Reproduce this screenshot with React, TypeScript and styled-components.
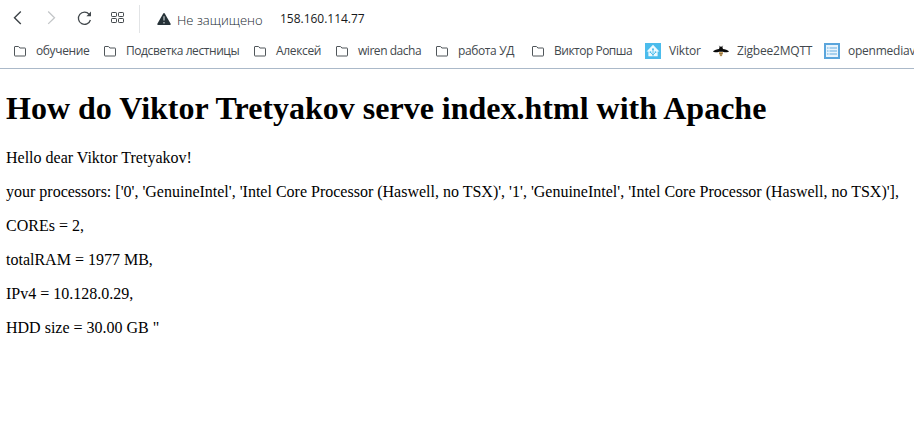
import React from "react";
import styled, { createGlobalStyle } from "styled-components";

const GlobalStyle = createGlobalStyle`
  html, body { margin: 0; padding: 0; background: #fff; overflow: hidden; }
  * { box-sizing: border-box; }
`;

const Window = styled.div`
  width: 914px;
  height: 424px;
  overflow: hidden;
  background: #fff;
`;

const Chrome = styled.header`
  height: 69px;
  border-bottom: 1px solid #abb9c9;
  font-family: "Open Sans", "Noto Sans", sans-serif;
  overflow: hidden;
`;

const Toolbar = styled.div`
  display: flex;
  align-items: center;
  height: 36px;
  padding-left: 10px;
`;

const NavButton = styled.span<{ $width: number }>`
  display: flex;
  flex: none;
  width: ${(p) => p.$width}px;
  height: 36px;
`;

const Divider = styled.span`
  flex: none;
  width: 1px;
  height: 28px;
  margin: 1px 16px 0 0;
  background: #e2e4e6;
`;

const Security = styled.span`
  display: flex;
  flex: none;
  width: 124px;
  height: 36px;
`;

const SecurityText = styled.span`
  margin: 11px 0 0 5px;
  font-size: 13px;
  line-height: 18px;
  letter-spacing: 0.02px;
  font-weight: 300;
  color: #20292f;
  white-space: nowrap;
`;

const Address = styled.span`
  margin-top: 1px;
  font-size: 12px;
  line-height: 18px;
  letter-spacing: -0.02px;
  color: #17191b;
  white-space: nowrap;
`;

const Bookmarks = styled.nav`
  display: flex;
  align-items: center;
  height: 30px;
  padding-left: 14px;
`;

const Bookmark = styled.span<{ $width: number; $gap: number }>`
  display: flex;
  flex: none;
  align-items: center;
  gap: ${(p) => p.$gap}px;
  width: ${(p) => p.$width}px;
`;

const BookmarkLabel = styled.span<{ $tracking: number }>`
  font-size: 12px;
  line-height: 18px;
  letter-spacing: ${(p) => p.$tracking}px;
  color: #42484d;
  white-space: nowrap;
`;

const Icon = styled.svg`
  display: block;
  flex: none;
`;

const Page = styled.main`
  display: flow-root;
  padding-left: 6px;
  font-family: "Liberation Serif", "Times New Roman", serif;
  font-size: 16px;
  color: #000;
`;

const Heading = styled.h1`
  margin: 21.44px 0;
  font-size: 32px;
  line-height: 37px;
  font-weight: 700;
  white-space: nowrap;
`;

const Paragraph = styled.p`
  margin: 16px 0;
  line-height: 18px;
  white-space: nowrap;
`;

const FolderIcon = () => (
  <Icon width="13" height="12" viewBox="0 0 13 12" fill="none" stroke="#50565a" strokeWidth="1">
    <path d="M.5 2q0-.5.5-.5h3.300q.5 0 .8.500l.7 1h5.200q.5 0 .5.5v7q0 .5-.5.5H1q-.5 0-.5-.5z" />
  </Icon>
);

const HomeIcon = () => (
  <Icon width="16" height="16" viewBox="0 0 16 16">
    <rect width="16" height="16" fill="#4bbcec" />
    <path d="M8 1.800 14.400 8.400h-1.800V13.300H3.400V8.400H1.600L8 1.800Z" fill="#eefaff" />
    <path d="M8 13.300V6.500M8 12 5.500 9.500M8 12 10.500 9.500" stroke="#4bbcec" strokeWidth=".9" fill="none" />
    <circle cx="8" cy="6.2" r="1" fill="#4bbcec" />
    <circle cx="5.5" cy="9.2" r=".9" fill="#4bbcec" />
    <circle cx="10.5" cy="9.2" r=".9" fill="#4bbcec" />
  </Icon>
);

const BeeIcon = () => (
  <Icon width="16" height="16" viewBox="0 0 16 16">
    <path d="M7.200 4.500 6.300 2.800M8.800 4.500 9.700 2.800" stroke="#333" strokeWidth=".7" />
    <path d="M8 3.600c1.200 0 1.800.9 1.900 2.300 2 .1 4.800.9 6.100 2.400-.8 1.200-3.600 1.300-6.100.4H6.100C3.600 9.600.8 9.500 0 8.300 1.300 6.800 4.100 6 6.100 5.900 6.200 4.500 6.800 3.600 8 3.600Z" fill="#090909" />
    <path d="M5.900 8.900h4.200C10 11 9 12.700 8 13.600 7 12.700 6 11 5.900 8.900Z" fill="#d9b06a" />
    <path d="M6.200 10.400h3.600M6.900 12.100h2.200" stroke="#3c3020" strokeWidth=".5" />
  </Icon>
);

const ListIcon = () => (
  <Icon width="16" height="16" viewBox="0 0 16 16">
    <rect width="16" height="16" fill="#5aa5dc" />
    <rect x="2" y="2" width="12" height="12" fill="#e9f4fc" />
    <path d="M3 5h1.500M3 8h1.500M3 11h1.500M5.500 5h7.500M5.500 8h7.500M5.500 11h7.500" stroke="#66acdf" strokeWidth="1.200" />
  </Icon>
);

const icons = { folder: FolderIcon, home: HomeIcon, bee: BeeIcon, list: ListIcon };

const bookmarks: { icon: keyof typeof icons; label: string; width: number; gap: number; tracking: number }[] = [
  { icon: "folder", label: "обучение", width: 90, gap: 9, tracking: -0.38 },
  { icon: "folder", label: "Подсветка лестницы", width: 150, gap: 9, tracking: -0.42 },
  { icon: "folder", label: "Алексей", width: 82, gap: 9, tracking: -0.35 },
  { icon: "folder", label: "wiren dacha", width: 100, gap: 9, tracking: -0.46 },
  { icon: "folder", label: "работа УД", width: 96, gap: 9, tracking: -0.38 },
  { icon: "folder", label: "Виктор Ропша", width: 113, gap: 9, tracking: -0.5 },
  { icon: "home", label: "Viktor", width: 68, gap: 8, tracking: -0.2 },
  { icon: "bee", label: "Zigbee2MQTT", width: 111, gap: 8, tracking: -0.2 },
  { icon: "list", label: "openmediav", width: 90, gap: 8, tracking: -0.24 },
];

const details = [
  "Hello dear Viktor Tretyakov!",
  "your processors: ['0', 'GenuineIntel', 'Intel Core Processor (Haswell, no TSX)', '1', 'GenuineIntel', 'Intel Core Processor (Haswell, no TSX)'],",
  "COREs = 2,",
  "totalRAM = 1977 MB,",
  "IPv4 = 10.128.0.29,",
  'HDD size = 30.00 GB "',
];

export default function App() {
  return (
    <Window>
      <GlobalStyle />
      <Chrome>
        <Toolbar>
          <NavButton $width={34}>
            <Icon width="16" height="36" fill="none" stroke="#3d4347" strokeWidth="1.4">
              <path d="M10.800 11.500 4.500 17.700l6.300 6.200" />
            </Icon>
          </NavButton>
          <NavButton $width={32}>
            <Icon width="16" height="36" fill="none" stroke="#c3c6c8" strokeWidth="1.300">
              <path d="m4.200 11.500 6.300 6.200-6.300 6.200" />
            </Icon>
          </NavButton>
          <NavButton $width={34}>
            <Icon width="18" height="36" fill="none" stroke="#42484c" strokeWidth="1.300">
              <path d="M13.200 14.300A6.100 6.100 0 1 0 14.400 20" />
              <path d="M15 11.600v4.600h-4.600z" fill="#42484c" stroke="none" />
            </Icon>
          </NavButton>
          <NavButton $width={29}>
            <Icon width="16" height="36" fill="none" stroke="#42484c" strokeWidth="1">
              <rect x="1.500" y="12.500" width="5" height="4" rx=".7" />
              <rect x="8.500" y="12.500" width="5" height="4" rx=".7" />
              <rect x="1.500" y="18.500" width="5" height="4" rx=".7" />
              <rect x="8.500" y="18.500" width="5" height="4" rx=".7" />
            </Icon>
          </NavButton>
          <Divider />
          <Security>
            <Icon width="16" height="36">
              <path d="M8 13q.5 0 .8.5l5.800 10.300q.5 1.200-.7 1.200H2.100q-1.200 0-.7-1.200l5.800-10.300Q7.500 13 8 13Z" fill="#263238" />
              <path d="M8 16.200v4.300M8 22v1.400" stroke="#b9c0c4" strokeWidth="1.300" />
            </Icon>
            <SecurityText>Не защищено</SecurityText>
          </Security>
          <Address>158.160.114.77</Address>
        </Toolbar>
        <Bookmarks>
          {bookmarks.map((b) => {
            const Glyph = icons[b.icon];
            return (
              <Bookmark key={b.label} $width={b.width} $gap={b.gap}>
                <Glyph />
                <BookmarkLabel $tracking={b.tracking}>{b.label}</BookmarkLabel>
              </Bookmark>
            );
          })}
        </Bookmarks>
      </Chrome>
      <Page>
        <Heading>How do Viktor Tretyakov serve index.html with Apache</Heading>
        {details.map((line) => (
          <Paragraph key={line}>{line}</Paragraph>
        ))}
      </Page>
    </Window>
  );
}
